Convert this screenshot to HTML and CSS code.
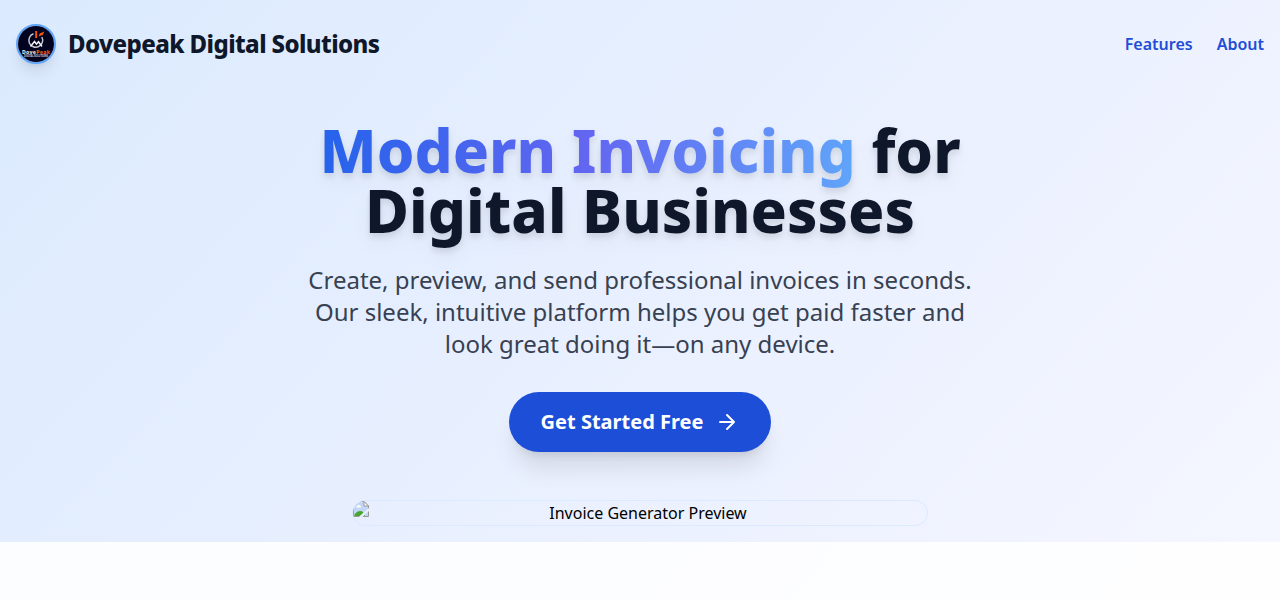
FILE: index.html
```html
<!DOCTYPE html>
<html lang="en">
<head>
<meta charset="utf-8">
<title>Dovepeak Digital Solutions</title>
<link rel="stylesheet" href="styles.css">
</head>
<body>
<div class="page">
  <header class="header">
    <div class="brand">
      <svg class="logo" viewBox="0 0 36 36" role="img" aria-label="Dovepeak logo">
        <rect width="36" height="36" fill="#02031f"/>
        <path d="M15.500 7.800A6.900 6.900 0 1 0 23.800 11" fill="none" stroke="#c3c4cc" stroke-width="1.500"/>
        <path d="M12.500 20.500l4-5 2 2.600 2-2.300 3.500 4.700" fill="none" stroke="#f2f2f5" stroke-width="1.500"/>
        <path d="M17.200 5h2v7h-2zM20.500 10.500l1.200-3 4.600-2-1.600 3.400z" fill="#f4580d"/>
        <text class="logo-name" x="4" y="27.600" textLength="28" fill="#e4e4e8">Dove<tspan fill="#f4580d">Peak</tspan></text>
        <text class="logo-sub" x="6" y="31.400" textLength="24" fill="#c8c8d2">DIGITAL SOLUTIONS</text>
      </svg>
      <span class="brand-name">Dovepeak Digital Solutions</span>
    </div>
    <nav class="nav"><a>Features</a><a>About</a></nav>
  </header>
  <main class="hero">
    <h1 class="title"><span class="accent">Modern Invoicing</span> for<br>Digital Businesses</h1>
    <p class="lead">Create, preview, and send professional invoices in seconds. Our sleek, intuitive platform helps you get paid faster and look great doing it—on any device.</p>
    <a class="cta">Get Started Free
      <svg class="arrow" viewBox="0 0 24 24" fill="none" stroke="currentColor" stroke-width="2" stroke-linecap="round" stroke-linejoin="round"><path d="M5 12h14M12 5l7 7-7 7"/></svg>
    </a>
    <div class="preview">
      <svg class="missing" viewBox="0 0 16 16">
        <path d="M1 1h10l4 4v10H1z" fill="#c3d5f5"/>
        <path d="M3 6.500q0-1.600 1.500-1.600.7-1.700 2.200-.6 1.600.2 1.300 2.200z" fill="#fff"/>
        <path d="M1 15q2-5 6.500-5 3 0 4.500 5z" fill="#45a52c"/>
        <path d="M.5 15.500v-15H11l4.500 4.500v10.500z" fill="none" stroke="#999"/>
        <path d="M11 .5V5h4.500z" fill="#fff" stroke="#999"/>
        <path d="M7 16.500L16.500 8" stroke="#e7eefe" stroke-width="2.500"/>
      </svg>
      <span class="preview-text">Invoice Generator Preview</span>
    </div>
  </main>
  <section class="features"></section>
</div>
</body>
</html>
```
FILE: styles.css
```css
* { box-sizing: border-box; }
body { margin: 0; font-family: "Noto Sans", sans-serif; font-size: 16px; line-height: 24px; color: #000; }
.page {
  display: flex; flex-direction: column; height: 600px; overflow: hidden;
  background: linear-gradient(to bottom right, #dbeafe, #eef2ff 50%, #fff) 0 0 / 100% 1400px no-repeat;
}
.header { display: flex; align-items: center; justify-content: space-between; padding: 24px 16px; }
.brand { display: flex; align-items: center; gap: 12px; }
.logo {
  display: block; width: 40px; height: 40px; border: 2px solid #60a5fa; border-radius: 50%;
  box-shadow: 0 10px 15px -3px rgba(0,0,0,.1), 0 4px 6px -4px rgba(0,0,0,.1);
}
.logo-name { font-size: 5.200px; font-weight: 800; }
.logo-sub { font-size: 2.600px; font-weight: 700; }
.brand-name { font-size: 24px; line-height: 32px; font-weight: 800; letter-spacing: -0.6px; color: #0f172a; }
.nav { display: flex; gap: 24px; font-weight: 600; color: #1d4ed8; }
.hero { display: flex; flex-direction: column; align-items: center; padding: 32px 16px 16px; text-align: center; }
.title {
  margin: 0 0 24px; font-size: 60px; line-height: 60px; font-weight: 800; color: #0f172a;
  filter: drop-shadow(0 10px 8px rgba(0,0,0,.04)) drop-shadow(0 4px 3px rgba(0,0,0,.1));
}
.accent {
  color: transparent; background: linear-gradient(to right, #2563eb, #6366f1, #60a5fa);
  -webkit-background-clip: text; background-clip: text;
}
.lead { margin: 0 0 32px; max-width: 672px; font-size: 24px; line-height: 32px; color: #374151; }
.cta {
  display: flex; align-items: center; gap: 12px; padding: 16px 32px; border-radius: 30px;
  background: #1d4ed8; color: #fff; font-size: 20px; line-height: 28px; font-weight: 700;
  box-shadow: 0 20px 25px -5px rgba(0,0,0,.1), 0 8px 10px -6px rgba(0,0,0,.1);
}
.arrow { width: 24px; height: 24px; }
.preview {
  display: flex; width: 576px; height: 26px; margin-top: 48px; overflow: hidden;
  border: 1px solid #dbeafe; border-radius: 16px;
  box-shadow: 0 25px 50px -12px rgba(0,0,0,.04);
}
.missing { flex: none; width: 16px; height: 16px; }
.preview-text { flex: 1; }
.features { flex: 1; background: rgba(255,255,255,.85); }
```
